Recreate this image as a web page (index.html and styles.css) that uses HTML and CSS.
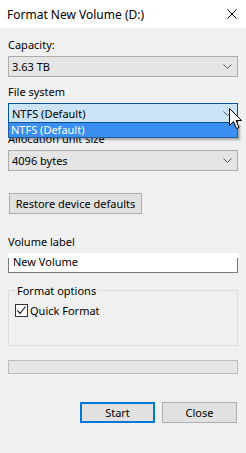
FILE: index.html
```html
<!DOCTYPE html>
<html lang="en">
<head>
    <meta charset="UTF-8">
    <title>Format New Volume (D:)</title>
    <link rel="stylesheet" href="styles.css">
</head>
<body>
<div class="window">
    <div class="titlebar">
        <span class="title">Format New Volume (D:)</span>
        <svg class="close" width="10" height="10" viewBox="0 0 10 10">
            <path d="M0.5 0.5 L9.5 9.5 M9.5 0.5 L0.5 9.5" stroke="#000" stroke-width="1"/>
        </svg>
    </div>

    <div class="content">
        <!-- Capacity -->
        <div class="label first">Capacity:</div>
        <div class="combo">
            <span>3.63 TB</span>
            <svg class="chevron" width="9" height="5" viewBox="0 0 9 5"><path d="M0.5 0.5 L4.5 4.5 L8.5 0.5" fill="none" stroke="#555" stroke-width="1"/></svg>
        </div>

        <!-- File system (open) -->
        <div class="label">File system</div>
        <div class="dropdown">
            <div class="combo focused">
                <span>NTFS (Default)</span>
                <svg class="chevron" width="9" height="5" viewBox="0 0 9 5"><path d="M0.5 0.5 L4.5 4.5 L8.5 0.5" fill="none" stroke="#555" stroke-width="1"/></svg>
            </div>
            <div class="list">
                <div class="item selected">NTFS (Default)</div>
            </div>
        </div>

        <!-- Allocation unit size -->
        <div class="label">Allocation unit size</div>
        <div class="combo">
            <span>4096 bytes</span>
            <svg class="chevron" width="9" height="5" viewBox="0 0 9 5"><path d="M0.5 0.5 L4.5 4.5 L8.5 0.5" fill="none" stroke="#555" stroke-width="1"/></svg>
        </div>

        <button class="btn restore">Restore device defaults</button>

        <!-- Volume label -->
        <div class="label volume">Volume label</div>
        <div class="textbox">New Volume</div>

        <fieldset class="group">
            <legend>Format options</legend>
            <label class="check">
                <span class="box">
                    <svg width="11" height="11" viewBox="0 0 11 11"><path d="M1.5 5.5 L4 8.5 L9.5 1.5" fill="none" stroke="#222" stroke-width="1.2"/></svg>
                </span>
                Quick Format
            </label>
        </fieldset>

        <div class="progress"></div>

        <div class="actions">
            <button class="btn default">Start</button>
            <button class="btn">Close</button>
        </div>
    </div>

    <!-- mouse pointer over the dropdown -->
    <svg class="cursor" width="13" height="22" viewBox="0 0 13 22">
        <path d="M0.5 0.5 L0.5 17.5 L4.5 13.5 L7.5 20.5 L10 19.5 L7 12.5 L12.5 12.5 Z" fill="#fff" stroke="#000" stroke-width="1"/>
    </svg>
</div>
</body>
</html>
```

FILE: styles.css
```css
body {
    margin: 0;
    background-color: #f0f0f0;
    font-family: "Noto Sans", sans-serif;
    font-size: 11px;
    color: #000;
}

.window {
    position: relative;
    width: 246px;
    height: 453px;
    background-color: #f0f0f0;
    overflow: hidden;
}

.titlebar {
    height: 28px;
    background-color: #fff;
    display: flex;
    align-items: center;
    justify-content: space-between;
    padding: 0 9px 0 7px;
}

.title {
    font-size: 12px;
    line-height: 15px;
}

.content {
    display: flex;
    flex-direction: column;
    padding: 0 8px;
}

.label {
    line-height: 15px;
    height: 15px;
    margin-top: 7px;
    margin-bottom: 4px;
}

.label.first {
    margin-top: 9px;
}

.combo {
    box-sizing: border-box;
    height: 21px;
    display: flex;
    align-items: center;
    justify-content: space-between;
    padding: 0 5px 0 3px;
    background-color: #e5e5e5;
    border: 1px solid #adadad;
    line-height: 15px;
}

.combo.focused {
    background-color: #cce4f7;
    border-color: #005499;
    height: 20px;
}

.chevron {
    display: block;
}

.dropdown {
    position: relative;
    height: 21px;
}

.list {
    position: absolute;
    left: 0;
    top: 20px;
    width: 230px;
    box-sizing: border-box;
    border: 1px solid #1f5f9e;
    border-top: none;
    background-color: #3a8ff0;
    box-shadow: 2px 2px 2px rgba(0, 0, 0, 0.3);
    z-index: 2;
}

.item {
    height: 14px;
    line-height: 14px;
    padding-left: 2px;
    color: #fff;
}

.btn {
    box-sizing: border-box;
    height: 21px;
    padding: 0;
    font-family: inherit;
    font-size: 11px;
    color: #000;
    background-color: #e1e1e1;
    border: 1px solid #adadad;
}

.restore {
    width: 133px;
    margin-top: 22px;
    margin-left: 1px;
    align-self: flex-start;
}

.label.volume {
    margin-top: 20px;
}

.textbox {
    box-sizing: border-box;
    height: 20px;
    padding-left: 5px;
    line-height: 18px;
    border-bottom: 1px solid #7a7a7a;
    background:
        linear-gradient(#7a7a7a, #7a7a7a) left bottom / 1px 14px no-repeat,
        linear-gradient(#7a7a7a, #7a7a7a) right bottom / 1px 14px no-repeat,
        #fff;
}

.group {
    box-sizing: border-box;
    height: 63px;
    margin: 10px 0 0;
    padding: 0 0 0 6px;
    border: 1px solid #dcdcdc;
    min-width: 0;
}

.group legend {
    padding: 0 1px;
    margin-left: 1px;
    line-height: 15px;
}

.check {
    display: flex;
    align-items: center;
    gap: 2px;
    margin-top: 5px;
    line-height: 15px;
}

.box {
    box-sizing: border-box;
    width: 13px;
    height: 13px;
    border: 1px solid #333;
    background-color: #fff;
    display: flex;
    align-items: center;
    justify-content: center;
}

.progress {
    box-sizing: border-box;
    height: 14px;
    margin-top: 14px;
    background-color: #e6e6e6;
    border: 1px solid #bcbcbc;
}

.actions {
    display: flex;
    justify-content: flex-end;
    gap: 7px;
    margin-top: 28px;
    padding-right: 1px;
}

.actions .btn {
    width: 75px;
}

.btn.default {
    border: 2px solid #0078d7;
}

.cursor {
    position: absolute;
    left: 229px;
    top: 108px;
    z-index: 3;
}
```
